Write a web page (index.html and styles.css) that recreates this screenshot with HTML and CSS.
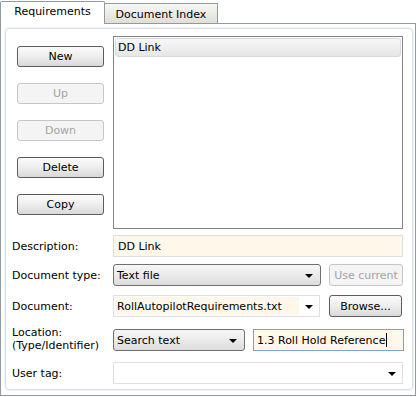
FILE: index.html
```html
<!DOCTYPE html>
<html>
<head>
<meta charset="utf-8">
<link rel="stylesheet" href="styles.css">
</head>
<body>
<div class="tabs">
  <div class="tab active">Requirements</div>
  <div class="tab">Document Index</div>
</div>
<div class="panel">
  <div class="group">
    <div class="top">
      <div class="buttons">
        <div class="btn">New</div>
        <div class="btn disabled">Up</div>
        <div class="btn disabled">Down</div>
        <div class="btn">Delete</div>
        <div class="btn">Copy</div>
      </div>
      <div class="list">
        <div class="item">DD Link</div>
      </div>
    </div>
    <div class="form">
      <div class="row r1">
        <div class="label">Description:</div>
        <div class="field text cream wide">DD Link</div>
      </div>
      <div class="row r2">
        <div class="label">Document type:</div>
        <div class="select doctype"><span>Text file</span><i class="arrow"></i></div>
        <div class="btn small disabled">Use current</div>
      </div>
      <div class="row r3">
        <div class="label">Document:</div>
        <div class="combo doc"><span class="ctext">RollAutopilotRequirements.txt</span><i class="arrow"></i></div>
        <div class="btn small browse">Browse...</div>
      </div>
      <div class="row r4">
        <div class="label two">Location:<br>(Type/Identifier)</div>
        <div class="select loc"><span>Search text</span><i class="arrow"></i></div>
        <div class="field text cream focus locid">1.3 Roll Hold Reference<span class="caret"></span></div>
      </div>
      <div class="row r5">
        <div class="label">User tag:</div>
        <div class="combo tag"><span class="ctext white"></span><i class="arrow"></i></div>
      </div>
    </div>
  </div>
</div>
</body>
</html>
```

FILE: styles.css
```css
html, body {
  margin: 0;
  padding: 0;
  background: #ffffff;
}
body {
  width: 418px;
  height: 397px;
  font-family: "DejaVu Sans", Verdana, sans-serif;
  font-size: 11px;
  color: #000;
  overflow: hidden;
}
.tabs {
  display: flex;
  align-items: flex-end;
  height: 23px;
  padding-left: 0;
}
.tab {
  box-sizing: border-box;
  height: 20px;
  width: 113px;
  border: 1px solid #919b9c;
  border-bottom: none;
  border-left: none;
  background: linear-gradient(#f7f7f4, #e0ded8);
  display: flex;
  align-items: center;
  justify-content: center;
  padding-top: 1px;
}
.tab.active {
  width: 105px;
  height: 23px;
  margin-bottom: -1px;
  border-left: 1px solid #919b9c;
  background: #fff;
  position: relative;
  z-index: 1;
  padding-top: 0;
  padding-bottom: 3px;
  border-radius: 2px 2px 0 0;
}
.panel {
  box-sizing: border-box;
  width: 416px;
  height: 373px;
  border: 1px solid #919b9c;
  background: #fff;
  padding: 4px 3px 3px 3px;
}
.group {
  box-sizing: border-box;
  height: 362px;
  width: 408px;
  margin-left: 1px;
  border: 1px solid #d6dfe6;
  border-radius: 4px;
  padding: 7px 8px 0 6px;
  box-shadow: 0 0 0 1px #f1f4f6;
}
.top {
  display: flex;
  gap: 9px;
}
.buttons {
  margin-left: 5px;
  padding-top: 10px;
  display: flex;
  flex-direction: column;
  gap: 16px;
}
.btn {
  box-sizing: border-box;
  width: 87px;
  height: 21px;
  border: 1px solid #5c5c5c;
  border-radius: 3px;
  background: linear-gradient(#fbfbfb 0%, #efefef 45%, #d9d9d9 100%);
  display: flex;
  align-items: center;
  justify-content: center;
  line-height: 1;
}
.btn.disabled {
  border-color: #c6c6c6;
  color: #a3a3a3;
  background: #f4f4f4;
}
.list {
  box-sizing: border-box;
  width: 290px;
  height: 193px;
  border: 1px solid #84828f;
  background: #fff;
  padding: 1px;
}
.item {
  box-sizing: border-box;
  height: 19px;
  border: 1px solid #d9d9d9;
  border-radius: 3px;
  background: linear-gradient(#f7f7f7, #e6e6e6);
  padding-left: 2px;
  display: flex;
  align-items: center;
}
.form {
  display: flex;
  flex-direction: column;
}
.row {
  display: flex;
  align-items: center;
  height: 22px;
}
.r1 { margin-top: 6px; }
.r2 { margin-top: 7px; }
.r3 { margin-top: 9px; }
.r4 { margin-top: 12px; }
.r5 { margin-top: 11px; }
.label {
  width: 101px;
  flex: none;
  line-height: 13px;
}
.label.two {
  margin-top: -2px;
}
.field {
  box-sizing: border-box;
  height: 22px;
  border: 1px solid #dedede;
  padding-left: 4px;
  display: flex;
  align-items: center;
}
.cream {
  background: #fff7e9;
}
.wide {
  width: 290px;
}
.focus {
  border-color: #7da2ce;
}
.locid {
  width: 151px;
  margin-left: 8px;
  padding-left: 3px;
}
.caret {
  display: inline-block;
  width: 1px;
  height: 14px;
  background: #000;
  margin-left: 1px;
}
.select {
  box-sizing: border-box;
  height: 22px;
  border: 1px solid #707070;
  border-radius: 3px;
  background: linear-gradient(#f7f7f7 0%, #ececec 45%, #dcdcdc 100%);
  display: flex;
  align-items: center;
  justify-content: space-between;
  padding: 0 7px 0 3px;
}
.doctype { width: 208px; }
.loc { width: 132px; }
.arrow {
  width: 0;
  height: 0;
  border-left: 4px solid transparent;
  border-right: 4px solid transparent;
  border-top: 4px solid #000;
  margin-top: 1px;
}
.small {
  width: 74px;
  height: 22px;
  margin-left: 8px;
}
.browse {
  margin-left: 9px;
  width: 73px;
}
.combo {
  box-sizing: border-box;
  height: 22px;
  border: 1px solid #e0e0e0;
  background: #fff;
  display: flex;
  align-items: center;
  padding: 1px 6px 1px 1px;
  gap: 6px;
}
.ctext {
  flex: 1;
  height: 100%;
  background: #fff7e9;
  display: flex;
  align-items: center;
  padding-left: 2px;
  white-space: nowrap;
  overflow: hidden;
}
.ctext.white { background: #fff; }
.doc { width: 207px; }
.tag { width: 290px; }
```
